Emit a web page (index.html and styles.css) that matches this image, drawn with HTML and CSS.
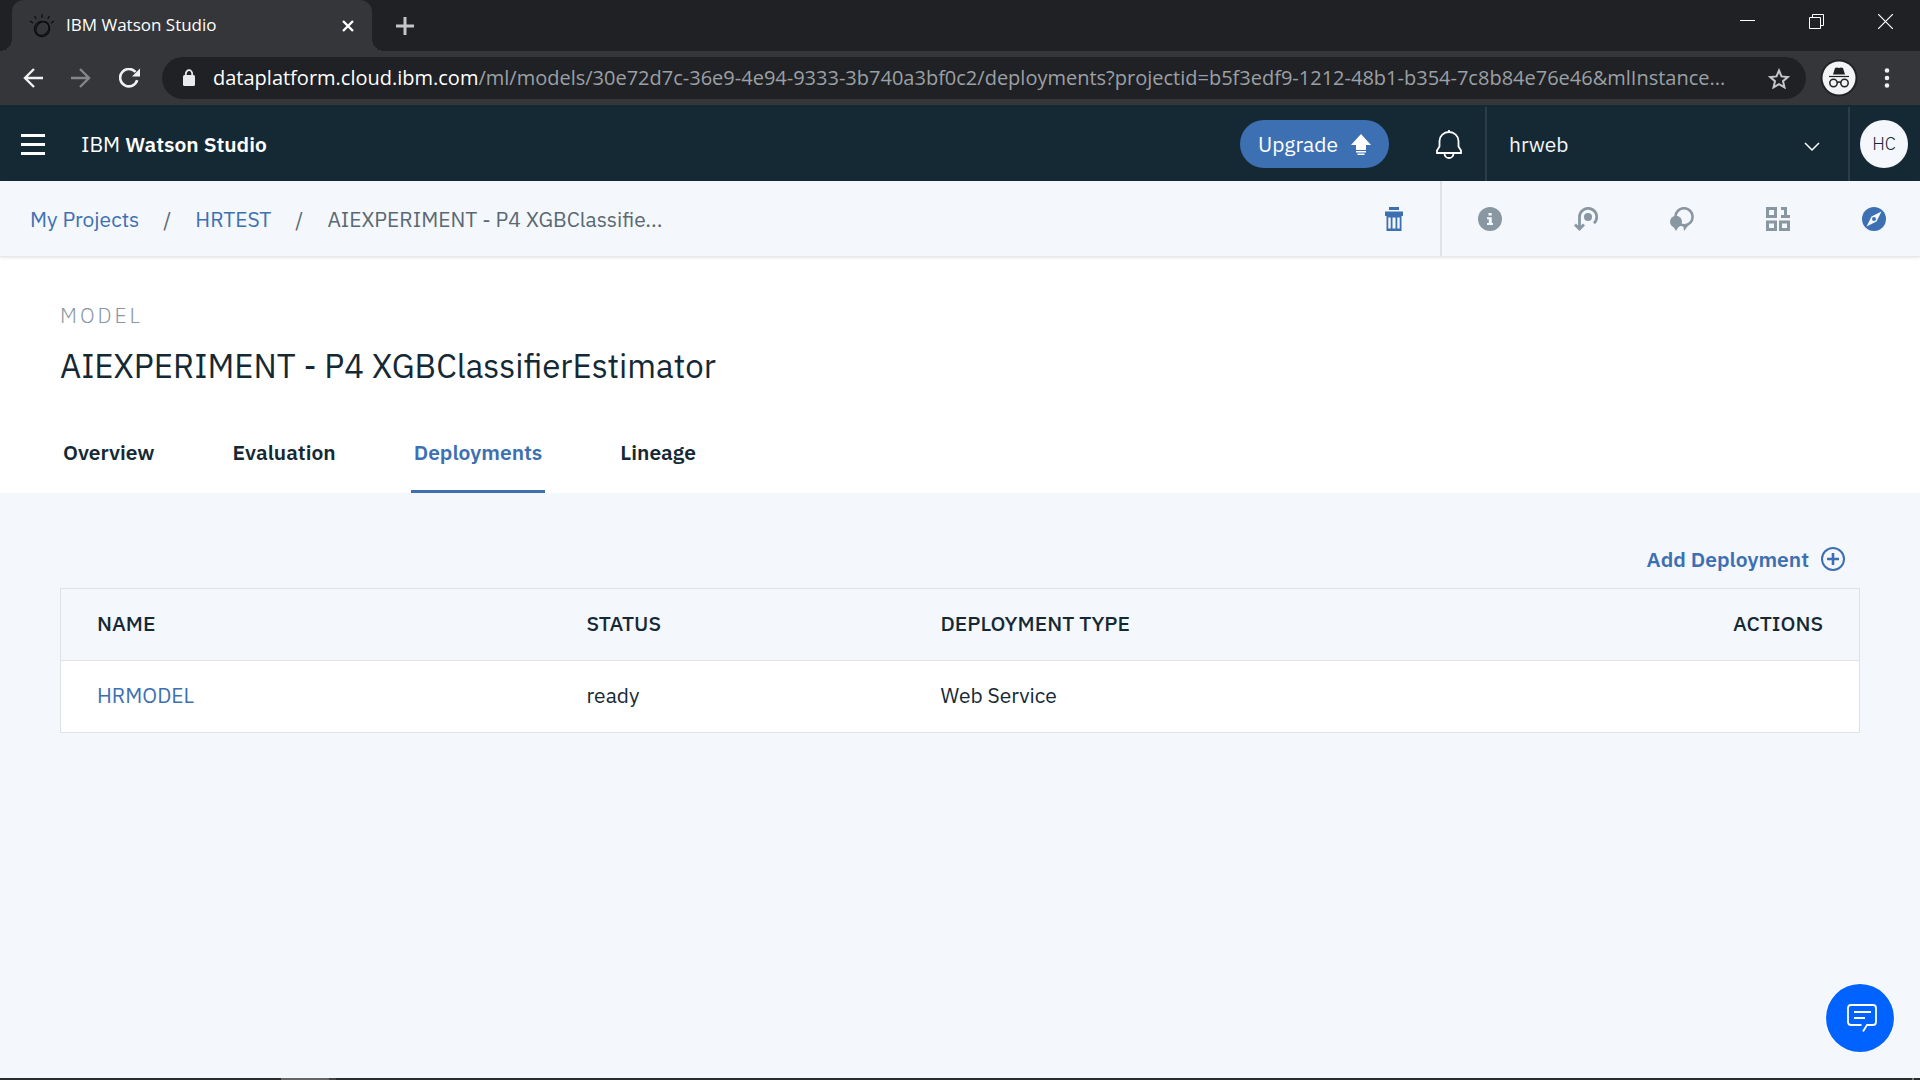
FILE: index.html
```html
<!DOCTYPE html>
<html lang="en">
<head>
<meta charset="utf-8">
<title>IBM Watson Studio</title>
<link rel="stylesheet" href="styles.css">
</head>
<body>
<header class="browser">
  <div class="tabstrip">
    <div class="browser-tab">
      <svg class="favicon" width="24" height="24" viewBox="0 0 24 24" fill="none" stroke="#0c0c0e" stroke-width="1.2"><circle cx="12" cy="15" r="7.6"/><ellipse cx="12.5" cy="14.5" rx="6" ry="7.4" transform="rotate(40 12.5 14.5)"/><path d="M12 0v4M4.5 2l1.8 3M19.500 2l-1.800 3M0 7l3 2M24 7l-3 2"/></svg>
      <span class="browser-tab-title">IBM Watson Studio</span>
      <button class="plain" aria-label="Close tab"><svg width="12" height="12" viewBox="0 0 12 12" stroke="#fff" stroke-width="2.400"><path d="M1 1l10 10M11 1L1 11"/></svg></button>
    </div>
    <button class="plain new-tab" aria-label="New tab"><svg width="18" height="18" viewBox="0 0 18 18" stroke="#c4c5c8" stroke-width="3"><path d="M9 0v18M0 9h18"/></svg></button>
    <div class="window-controls">
      <button class="plain" aria-label="Minimize"><svg width="15" height="15" viewBox="0 0 15 15" stroke="#fff"><path d="M0 6.500h15"/></svg></button>
      <button class="plain" aria-label="Restore"><svg width="15" height="15" viewBox="0 0 15 15" stroke="#fff" fill="none"><path d="M.5 3.500h11v11H.5zM3.500 3.500v-3h11v11h-3"/></svg></button>
      <button class="plain" aria-label="Close"><svg width="15" height="15" viewBox="0 0 15 15" stroke="#fff" stroke-width="1.200"><path d="M0 0l15 15M15 0L0 15"/></svg></button>
    </div>
  </div>
  <div class="toolbar">
    <div class="nav-buttons">
      <button class="plain" aria-label="Back"><svg width="20" height="20" viewBox="0 0 20 20" fill="none" stroke="#f1f1f2" stroke-width="2.400"><path d="M20 10H2M11 1l-9 9 9 9"/></svg></button>
      <button class="plain" aria-label="Forward"><svg width="20" height="20" viewBox="0 0 20 20" fill="none" stroke="#85868a" stroke-width="2.400"><path d="M0 10h18M9 1l9 9-9 9"/></svg></button>
      <button class="plain" aria-label="Reload"><svg width="22" height="20" viewBox="0 0 22 20" fill="none" stroke="#f1f1f2" stroke-width="2.600"><path d="M18.200 12.200A8.700 8.700 0 1 1 16.500 4"/><path d="M21 .5v8h-8z" fill="#f1f1f2" stroke="none"/></svg></button>
    </div>
    <div class="address">
      <svg width="12" height="18" viewBox="0 0 12 18"><path d="M2.800 7V5a3.200 3.800 0 0 1 6.400 0v2" fill="none" stroke="#e8eaed" stroke-width="1.800"/><rect y="6" width="12" height="11" rx="1.500" fill="#e8eaed"/></svg>
      <span class="url"><span class="host">dataplatform.cloud.ibm.com</span>/ml/models/30e72d7c-36e9-4e94-9333-3b740a3bf0c2/deployments?projectid=b5f3edf9-1212-48b1-b354-7c8b84e76e46&amp;mlInstance...</span>
      <button class="plain" aria-label="Bookmark"><svg width="22" height="21" viewBox="0 0 22 21" fill="none" stroke="#c4c6ca" stroke-width="2"><path d="M11 2.500l2.500 5.900 6.300.6-4.800 4.200 1.500 6.200L11 16.100l-5.500 3.300L7 13.200 2.200 9l6.300-.6z"/></svg></button>
    </div>
    <svg class="incognito" width="38" height="38" viewBox="0 0 38 38"><circle cx="19" cy="19" r="18.500" fill="#202124"/><circle cx="19" cy="19" r="16.500" fill="#f1f3f4"/><path d="M13 15.500l2-6.500q2-1 4 0 2-1 4 0l2 6.500z" fill="#202124"/><path d="M9 17.500h20" stroke="#202124" stroke-width="1.200"/><g fill="none" stroke="#202124" stroke-width="1.500"><circle cx="13.500" cy="24" r="3.700"/><circle cx="24.500" cy="24" r="3.700"/><path d="M17 23.500q2-1 4 0"/></g></svg>
    <button class="plain menu-dots" aria-label="Browser menu"><svg width="6" height="20" viewBox="0 0 6 20" fill="#f1f1f2"><circle cx="3" cy="2.500" r="2.300"/><circle cx="3" cy="10" r="2.300"/><circle cx="3" cy="17.500" r="2.300"/></svg></button>
  </div>
</header>

<div class="app-header">
  <button class="plain burger" aria-label="Main menu"><svg width="24" height="21" viewBox="0 0 24 21" stroke="#fff" stroke-width="3"><path d="M0 1.500h24M0 10.500h24M0 19.500h24"/></svg></button>
  <div class="brand">IBM <strong>Watson Studio</strong></div>
  <button class="upgrade">Upgrade <svg width="20" height="21" viewBox="0 0 20 21" fill="#fff"><path d="M10 0L0 11h5v5h10v-5h5zM5 17h10v1.400H5zM6.500 19.500h7V21h-7z"/></svg></button>
  <button class="plain bell" aria-label="Notifications"><svg width="26" height="29" viewBox="0 0 26 29" fill="none" stroke="#fff" stroke-width="1.800"><path d="M13 0v3M1 23v-2.500l2.500-4V11a9.500 9 0 0 1 19 0v5.500l2.500 4V23zM8.500 23.500a4.500 4.500 0 0 0 9 0"/></svg></button>
  <button class="account">hrweb <svg width="16" height="10" viewBox="0 0 16 10" fill="none" stroke="#fff" stroke-width="1.500"><path d="M1 1l7 7 7-7"/></svg></button>
  <div class="avatar-box"><button class="avatar">HC</button></div>
</div>

<div class="crumb-bar">
  <nav class="crumbs" aria-label="Breadcrumb"><a href="#">My Projects</a><span class="slash">/</span><a href="#">HRTEST</a><span class="slash">/</span><span>AIEXPERIMENT - P4 XGBClassifie...</span></nav>
  <button class="plain trash" aria-label="Delete"><svg width="18" height="24" viewBox="0 0 18 24" fill="#3d70b2"><path d="M4 0h10v3H4zM0 4.500h18V9H0z"/><path fill-rule="evenodd" d="M1.500 9h15v15h-15zM3.300 10.500v11h2.400v-11zM7.500 10.500v11h3v-11zM12.300 10.500v11h2.400v-11z"/></svg></button>
  <div class="panel-tools">
    <button class="plain" aria-label="Information"><svg width="24" height="24" viewBox="0 0 24 24"><circle cx="12" cy="12" r="12" fill="#8897a2"/><path d="M10.500 6h3.200v2.600h-3.200zM9 10.300h4.800v5.800H15V18H9v-1.900h1.800v-3.900H9z" fill="#f4f7fb"/></svg></button>
    <button class="plain" aria-label="Activity"><svg width="24" height="24" viewBox="0 0 24 24"><circle cx="14" cy="10" r="4" fill="#8897a2"/><path d="M20 16.300a8.600 8.600 0 1 0-14.500-6.300V21M1 17.500l4.500 4.500 4.500-4.500" fill="none" stroke="#8897a2" stroke-width="2.800"/></svg></button>
    <button class="plain" aria-label="Comments"><svg width="24" height="24" viewBox="0 0 24 24"><circle cx="6" cy="14.700" r="6" fill="#8897a2"/><path d="M3 19h6l-3 5z" fill="#8897a2"/><circle cx="14" cy="9.800" r="8.600" fill="none" stroke="#8897a2" stroke-width="2.600"/><path d="M13 17.500h6l-5 6.500z" fill="#8897a2"/></svg></button>
    <button class="plain" aria-label="Data"><svg width="24" height="24" viewBox="0 0 24 24" fill="none" stroke="#8897a2" stroke-width="3"><path d="M1.500 1.500h8v8h-8zM1.500 15h8v7.500h-8zM14.500 15h8v7.500h-8zM15 1.500h4.500V9M15 9.500h9"/></svg></button>
    <button class="plain" aria-label="Explore"><svg width="24" height="24" viewBox="0 0 24 24"><circle cx="12" cy="12" r="12" fill="#3d70b2"/><path d="M19.500 4.500l-5 10-10 5 5-10z" fill="#f4f7fb"/><circle cx="12" cy="12" r="2" fill="#3d70b2"/></svg></button>
  </div>
</div>

<section class="model-head">
  <p class="eyebrow">MODEL</p>
  <h1>AIEXPERIMENT - P4 XGBClassifierEstimator</h1>
  <nav class="tabs"><a href="#">Overview</a><a href="#">Evaluation</a><a class="active" href="#" aria-current="page">Deployments</a><a href="#">Lineage</a></nav>
</section>

<main class="content">
  <button class="add">Add Deployment <svg width="24" height="24" viewBox="0 0 24 24" fill="none" stroke="#3d70b2"><circle cx="12" cy="12" r="11" stroke-width="2"/><path d="M12 6v12M6 12h12" stroke-width="2.600"/></svg></button>
  <table>
    <thead><tr><th class="col-name">NAME</th><th class="col-status">STATUS</th><th>DEPLOYMENT TYPE</th><th class="col-actions">ACTIONS</th></tr></thead>
    <tbody><tr><td><a href="#">HRMODEL</a></td><td>ready</td><td>Web Service</td><td></td></tr></tbody>
  </table>
</main>
<button class="chat" aria-label="Chat"><svg width="30" height="28" viewBox="0 0 30 28" fill="none" stroke="#fff" stroke-width="1.800"><path d="M14.500 21H4q-3 0-3-3V4q0-3 3-3h22q3 0 3 3v14q0 3-3 3h-6l-4 6.500M7 8h17M7 14h11"/></svg></button>
<footer class="taskbar"><span class="task-active"></span><span class="task-next"></span><span class="task-end"></span></footer>
</body>
</html>
```
FILE: styles.css
```css
* { box-sizing: border-box; }
body {
  margin: 0;
  min-height: 100vh;
  display: flex;
  flex-direction: column;
  background: #f4f7fb;
  color: #152935;
  font: 21px/30px "IBM Plex Sans", Roboto, sans-serif;
}
a { color: #3d70b2; text-decoration: none; }
button { font: inherit; cursor: pointer; }
svg { display: block; flex: none; }
.plain { display: flex; align-items: center; justify-content: center; padding: 0; border: 0; background: none; }

.browser { background: #35363a; font-family: "Segoe UI", "Open Sans", sans-serif; }
.tabstrip { display: flex; height: 51px; padding-left: 12px; background: #202124; }
.browser-tab {
  position: relative;
  display: flex;
  align-items: center;
  width: 360px;
  padding: 0 18px;
  gap: 12px;
  background: #35363a;
  border-radius: 12px 12px 0 0;
  color: #fff;
  font-size: 17px;
}
.browser-tab::before, .browser-tab::after { content: ""; position: absolute; bottom: 0; width: 12px; height: 12px; }
.browser-tab::before { left: -12px; background: radial-gradient(circle at 0 0, #202124 12px, #35363a 12px); }
.browser-tab::after { right: -12px; background: radial-gradient(circle at 100% 0, #202124 12px, #35363a 12px); }
.browser-tab-title { flex: 1; padding-bottom: 2px; }
.new-tab { padding: 0 24px; }
.window-controls { display: flex; align-items: flex-start; gap: 54px; margin-left: auto; padding: 14px 27px 0 0; }
.toolbar { display: flex; align-items: center; height: 54px; padding: 0 30px 0 23px; }
.nav-buttons { display: flex; gap: 28px; }
.address {
  display: flex;
  align-items: center;
  flex: 1;
  min-width: 0;
  height: 42px;
  margin-left: 21px;
  padding: 0 16px 0 21px;
  background: #202124;
  border-radius: 21px;
  color: #9aa0a6;
}
.url { flex: 1; min-width: 0; margin-left: 18px; overflow: hidden; white-space: nowrap; font-size: 20px; }
.host { color: #fff; }
.incognito { margin: 0 26px 0 14px; }

.app-header { display: flex; align-items: center; height: 76px; padding: 2px 0 0 21px; background: #152935; color: #fff; }
.brand { margin: 0 auto 0 36px; }
.brand strong { font-weight: 600; }
.upgrade {
  display: flex;
  align-items: center;
  gap: 13px;
  height: 48px;
  padding: 0 18px;
  border: 0;
  border-radius: 24px;
  background: #3d70b2;
  color: #fff;
}
.bell { margin: 0 23px 0 47px; }
.account {
  display: flex;
  align-items: center;
  justify-content: space-between;
  align-self: stretch;
  width: 363px;
  padding: 0 28px 0 22px;
  border: 0;
  border-left: 2px solid #2b3d49;
  background: none;
  color: #f4f7fb;
}
.account svg { margin-top: 6px; }
.avatar-box { display: flex; align-items: center; align-self: stretch; padding: 0 12px 0 10px; border-left: 2px solid #2b3d49; }
.avatar { width: 48px; height: 48px; padding: 0; border: 0; border-radius: 50%; background: #f4f7fb; color: #152935; font-size: 18px; font-weight: 300; }

.crumb-bar { display: flex; align-items: center; height: 76px; padding-left: 30px; border-bottom: 1px solid #e6e9ec; box-shadow: 0 1px 3px #0000001a; z-index: 1; }
.crumbs { display: flex; margin-right: auto; color: #5a6872; }
.slash { padding: 0 24px; }
.trash { margin-right: 37px; }
.panel-tools { display: flex; align-self: stretch; border-left: 2px solid #dfe3e6; margin-right: -2px; }
.panel-tools button { width: 96px; }

.model-head { padding: 43px 60px 0; background: #fff; }
.eyebrow { margin: 0; color: #8897a2; letter-spacing: 3px; font-weight: 300; }
h1 { margin: 12px 0 0; font-size: 33px; line-height: 48px; font-weight: 400; }
.tabs { display: flex; gap: 72px; margin-top: 29px; }
.tabs a { padding: 18px 3px 23px; color: #152935; font-weight: 600; border-bottom: 3px solid transparent; }
.tabs .active { color: #3d70b2; border-color: #3d70b2; }

.content { flex: 1; display: flex; flex-direction: column; padding: 51px 60px; }
.add { display: flex; align-items: center; align-self: flex-end; gap: 12px; margin-bottom: 14px; padding: 0 15px 0 0; border: 0; background: none; color: #3d70b2; font-weight: 600; }
table { width: 100%; border-collapse: collapse; border: 1px solid #dfe3e6; table-layout: fixed; }
th, td { height: 72px; padding: 0 0 4px 36px; border-bottom: 1px solid #dfe3e6; text-align: left; font-weight: 400; }
th { font-weight: 500; }
tbody { background: #fff; }
.col-name { width: 490px; }
.col-status { width: 354px; }
.col-actions { padding-right: 36px; text-align: right; }

.chat {
  position: fixed;
  right: 26px;
  bottom: 28px;
  display: flex;
  align-items: center;
  justify-content: center;
  width: 68px;
  height: 68px;
  padding: 0 0 0 3px;
  border: 0;
  border-radius: 50%;
  background: #0062ff;
  box-shadow: 0 0 0 1px #fff;
}
.taskbar { display: flex; height: 2px; padding: 0 6px 0 281px; background: #2b2c2e; }
.task-active { width: 48px; background: #666; }
.task-next { width: 7px; background: #444; }
.task-end { width: 2px; margin-left: auto; background: #777; }
```
